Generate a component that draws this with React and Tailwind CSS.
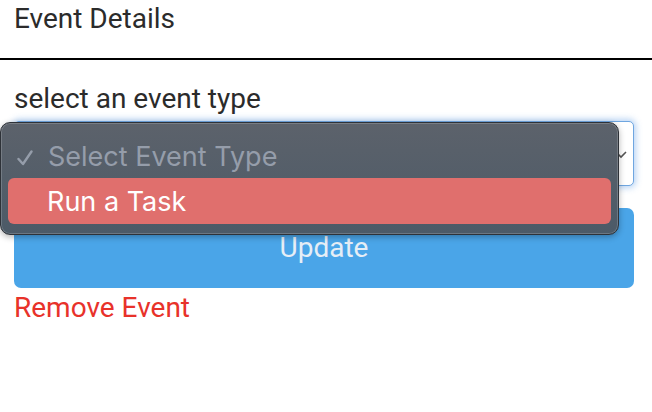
import React from 'react';

export default function App() {
    return (
        <div className="relative w-[652px] h-[412px] overflow-hidden bg-white font-['Roboto',sans-serif] text-[#2b2b2b]">
            {/* header */}
            <div className="h-[58px] pl-[14px] pt-[3px] text-[28px] leading-[32px]">Event Details</div>
            <div className="h-[2px] bg-black" />

            <div className="pl-[14px] pr-[18px]">
                <div className="mt-[23px] text-[28px] leading-[32px]">select an event type</div>

                {/* select box (focused) */}
                <div className="mt-[6px] h-[65px] rounded-[5px] border border-[#6fa6e0] bg-white shadow-[0_0_6px_2px_rgba(100,160,230,0.45)] flex items-center justify-end pr-[5px]">
                    <svg width="14" height="14" viewBox="0 0 14 14" className="text-[#555]">
                        <path d="M2 5l5 5 5-5" fill="none" stroke="currentColor" strokeWidth="1.6" />
                    </svg>
                </div>

                <button className="mt-[22px] w-full h-[80px] rounded-[7px] bg-[#4aa5e8] text-[28px] text-[#e6eef6] flex items-center justify-center">
                    Update
                </button>

                <div className="mt-[4px] text-[28px] leading-[32px] text-[#e8322a]">Remove Event</div>
            </div>

            {/* open native dropdown menu */}
            <div className="absolute left-0 top-[122px] w-[619px] h-[113px] rounded-[10px] border border-[#2e3238] bg-gradient-to-b from-[#5c626b] to-[#4c5a67] shadow-[inset_0_0_0_1px_rgba(255,255,255,0.18),0_2px_6px_rgba(0,0,0,0.3)] font-['Inter',sans-serif]">
                <div className="flex items-center h-[55px] pt-[13px] pl-[16px] text-[27px] text-[#959daa]">
                    <svg width="16" height="16" viewBox="0 0 16 16" className="mr-[15px] mt-[2px] shrink-0">
                        <path d="M1.5 9l4.5 5 8.5-12.5" fill="none" stroke="currentColor" strokeWidth="2.4" strokeLinecap="round" strokeLinejoin="round" />
                    </svg>
                    <span>Select Event Type</span>
                </div>
                <div className="mx-[7px] h-[46px] rounded-[6px] bg-[#e06f6d] flex items-center pt-[3px] pl-[39px] text-[27px] text-white">
                    Run a Task
                </div>
            </div>
        </div>
    );
}
